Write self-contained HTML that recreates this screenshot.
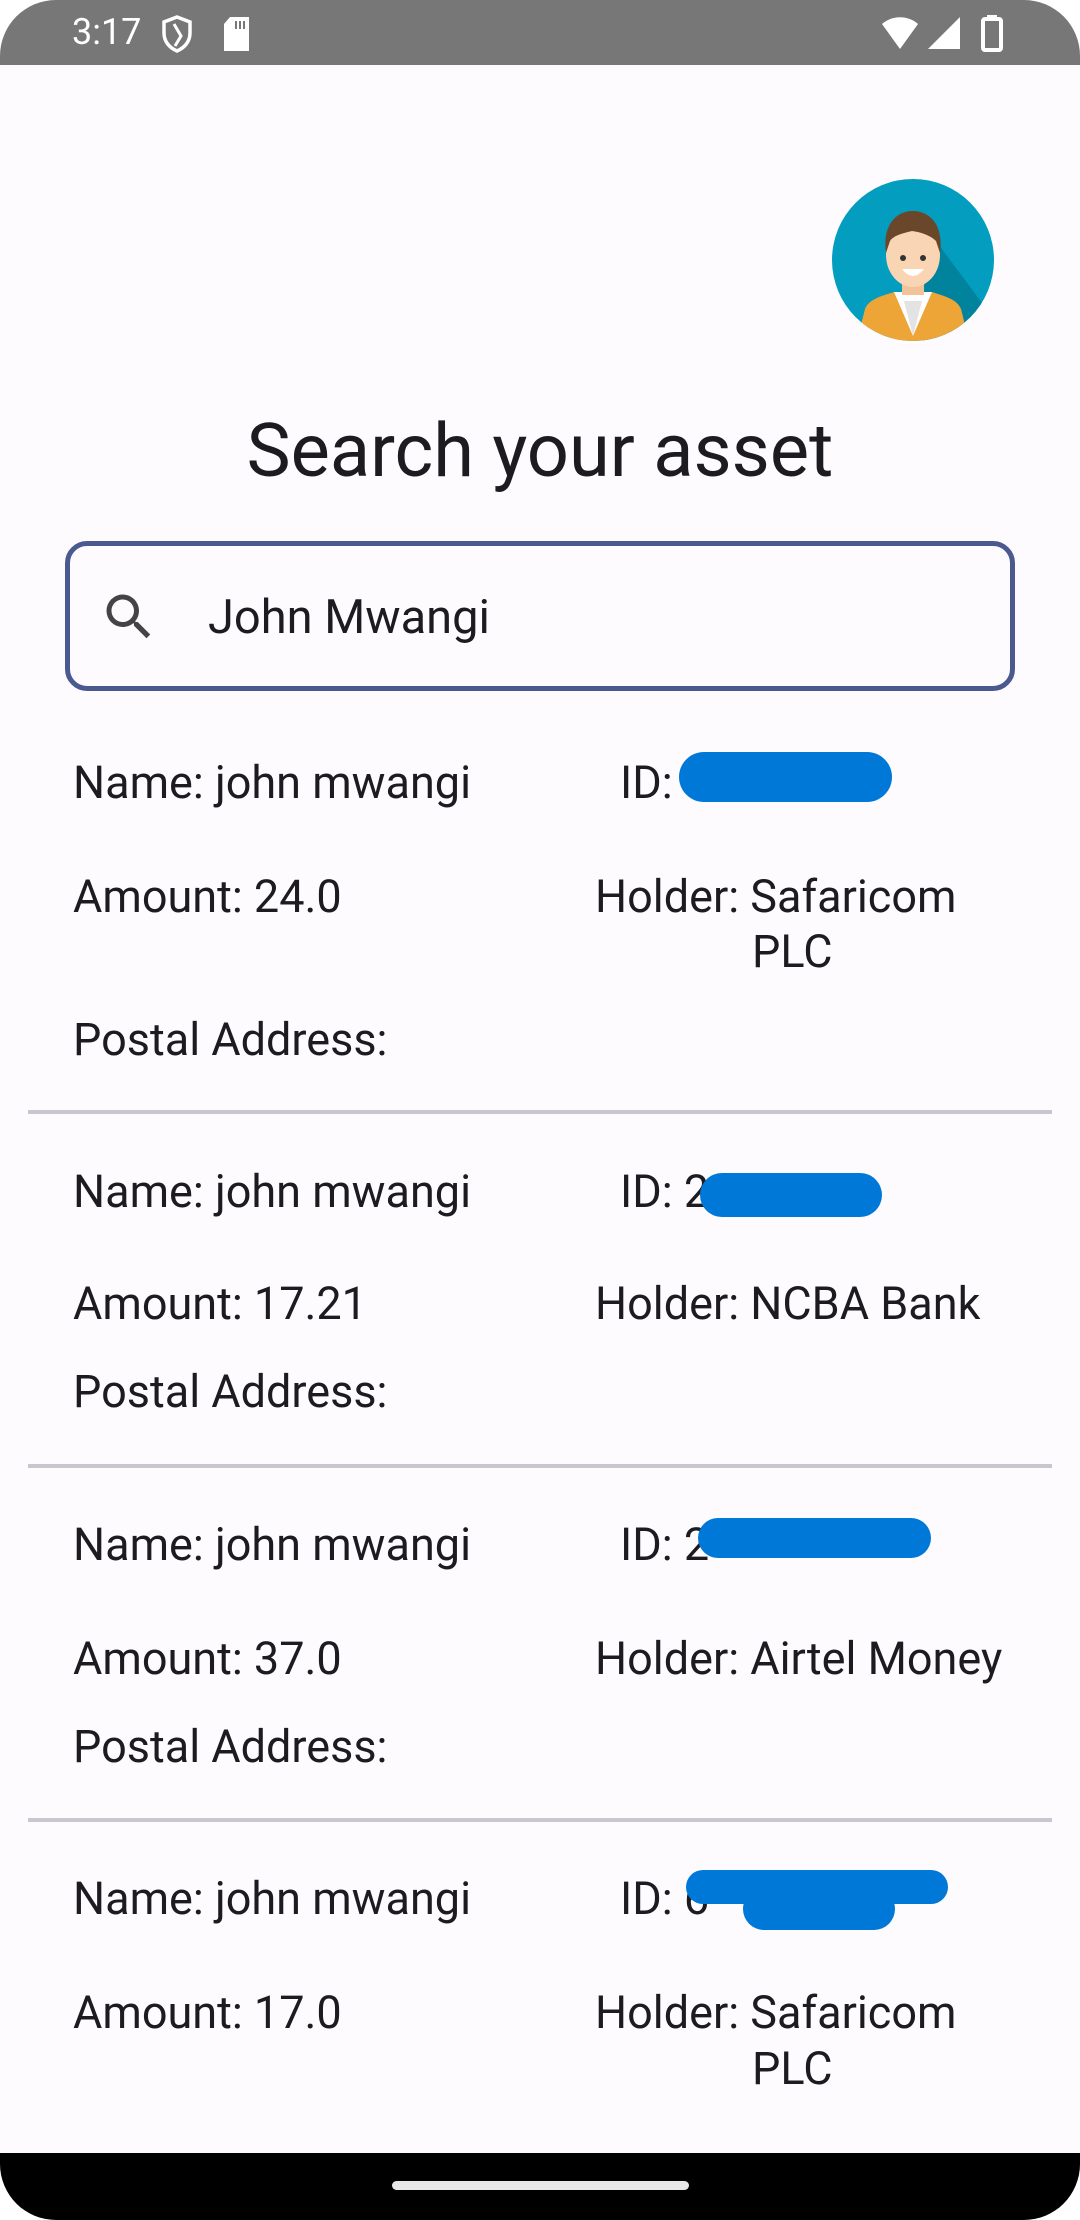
<!DOCTYPE html>
<html><head><meta charset="utf-8"><style>
*{margin:0;padding:0;box-sizing:border-box}
body{width:1080px;height:2220px;background:#fff;position:relative;overflow:hidden;font-family:"Roboto","Liberation Sans",sans-serif;color:#1c1b1f}
#screen{position:absolute;left:0;top:0;width:1080px;height:2220px;background:#fdfbfe;border-radius:56px;overflow:hidden}
.sb{position:absolute;left:0;top:0;width:1080px;height:65px;background:#777}
.t{position:absolute;white-space:nowrap;font-size:45px;line-height:1}
.div{position:absolute;left:28px;width:1024px;height:4px;background:#cac6d0}
.sc{position:absolute;background:#0078d7;border-radius:30px}
</style></head><body><div id="screen">
<div class="sb"></div>
<div class="t" style="left:72px;top:14px;color:#fff;font-size:36px">3:17</div>
<svg style="position:absolute;left:160px;top:14px" width="34" height="40" viewBox="0 0 34 40"><path d="M17 3 L30 8 V19 C30 28 24 34 17 37 C10 34 4 28 4 19 V8 Z" fill="none" stroke="#fff" stroke-width="3.5"/><path d="M14 10 L21 22 L15 32" fill="none" stroke="#fff" stroke-width="3"/></svg>
<svg style="position:absolute;left:222px;top:16px" width="30" height="36" viewBox="0 0 30 36"><path d="M8 1 H27 V35 H2 V8 Z" fill="#fff"/><path d="M14 5v8M18 5v8M22 5v8" stroke="#777" stroke-width="2"/></svg>
<svg style="position:absolute;left:880px;top:16px" width="40" height="34" viewBox="0 0 40 34"><path d="M2 8 C12 -1 28 -1 38 8 L20 33 Z" fill="#fff"/></svg>
<svg style="position:absolute;left:926px;top:16px" width="36" height="34" viewBox="0 0 36 34"><path d="M34 1 V33 H2 Z" fill="#fff"/></svg>
<svg style="position:absolute;left:980px;top:14px" width="24" height="38" viewBox="0 0 24 38"><rect x="7" y="1" width="10" height="5" fill="#fff"/><rect x="3" y="5" width="18" height="31" rx="2" fill="none" stroke="#fff" stroke-width="4"/></svg>

<svg style="position:absolute;left:832px;top:179px" width="162" height="162" viewBox="0 0 162 162">
<defs><clipPath id="c"><circle cx="81" cy="81" r="81"/></clipPath></defs>
<g clip-path="url(#c)">
<rect width="162" height="162" fill="#039dbf"/>
<path d="M95 50 L162 140 V162 H90 Z" fill="#01839d"/>
<path d="M25 162 L33 130 C37 120 50 117 62 113 H100 C112 117 125 120 129 130 L137 162 Z" fill="#eea538"/>
<path d="M62 113 L81 157 L100 113 Z" fill="#fff"/>
<path d="M72 122 L81 157 L90 122 Z" fill="#e3e3e3"/>
<rect x="70" y="96" width="22" height="20" fill="#f2c29a"/>
<ellipse cx="81" cy="76" rx="27" ry="32" fill="#f9d5b4"/>
<path d="M54 74 C50 45 65 32 81 32 C97 32 112 45 108 74 L104 62 C98 56 88 53 80 52 C72 54 62 56 58 62 Z" fill="#6a472a"/>
<circle cx="71" cy="79" r="3" fill="#333"/><circle cx="91" cy="79" r="3" fill="#333"/>
<path d="M70 90 Q81 104 92 90 Z" fill="#fff"/>
</g></svg>

<div class="t" style="left:0;width:1080px;text-align:center;top:415px;font-size:74px">Search your asset</div>

<div style="position:absolute;left:65px;top:541px;width:950px;height:150px;border:5px solid #4a5a8f;border-radius:22px"></div>
<svg style="position:absolute;left:99px;top:587px" width="60" height="60" viewBox="0 0 24 24"><path d="M15.5 14h-.79l-.28-.27A6.47 6.47 0 0 0 16 9.5 6.5 6.5 0 1 0 9.5 16c1.61 0 3.09-.59 4.23-1.57l.27.28v.79l5 4.99L20.49 19l-4.99-5zm-6 0C7.01 14 5 11.99 5 9.5S7.01 5 9.5 5 14 7.01 14 9.5 11.99 14 9.5 14z" fill="#444"/></svg>
<div class="t" style="left:208px;top:594px;font-size:47px">John Mwangi</div>

<div class="t" style="left:73px;top:760px">Name: john mwangi</div>
<div class="t" style="left:620px;top:760px">ID: 0</div>
<div class="sc" style="left:679px;top:752px;width:213px;height:50px;border-radius:25px"></div>
<div class="t" style="left:73px;top:874px">Amount: 24.0</div>
<div class="t" style="left:595px;top:874px">Holder: Safaricom</div>
<div class="t" style="left:752px;top:929px">PLC</div>
<div class="t" style="left:73px;top:1017px">Postal Address:</div>
<div class="div" style="top:1110px"></div>

<div class="t" style="left:73px;top:1169px">Name: john mwangi</div>
<div class="t" style="left:620px;top:1169px">ID: 2</div>
<div class="sc" style="left:700px;top:1173px;width:182px;height:44px"></div>
<div class="t" style="left:73px;top:1281px">Amount: 17.21</div>
<div class="t" style="left:595px;top:1281px">Holder: NCBA Bank</div>
<div class="t" style="left:73px;top:1369px">Postal Address:</div>
<div class="div" style="top:1464px"></div>

<div class="t" style="left:73px;top:1522px">Name: john mwangi</div>
<div class="t" style="left:620px;top:1522px">ID: 2</div>
<div class="sc" style="left:698px;top:1518px;width:233px;height:40px"></div>
<div class="t" style="left:73px;top:1636px">Amount: 37.0</div>
<div class="t" style="left:595px;top:1636px">Holder: Airtel Money</div>
<div class="t" style="left:73px;top:1724px">Postal Address:</div>
<div class="div" style="top:1818px"></div>

<div class="t" style="left:73px;top:1876px">Name: john mwangi</div>
<div class="t" style="left:620px;top:1876px">ID: 6</div>
<div class="sc" style="left:686px;top:1870px;width:262px;height:34px"></div>
<div class="sc" style="left:743px;top:1888px;width:152px;height:42px"></div>
<div class="t" style="left:73px;top:1990px">Amount: 17.0</div>
<div class="t" style="left:595px;top:1990px">Holder: Safaricom</div>
<div class="t" style="left:752px;top:2046px">PLC</div>

<div style="position:absolute;left:0;top:2153px;width:1080px;height:67px;background:#000"></div>
<div style="position:absolute;left:392px;top:2181px;width:297px;height:9px;background:#e8e8e8;border-radius:5px"></div>
</div></body></html>
